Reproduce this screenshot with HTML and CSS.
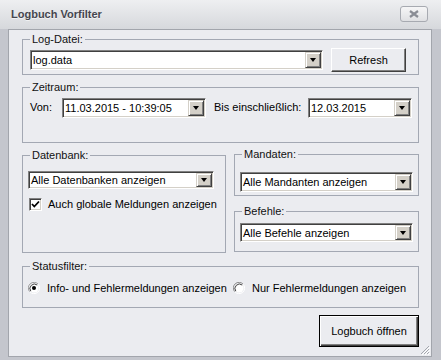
FILE: index.html
```html
<!DOCTYPE html>
<html lang="de">
<head>
<meta charset="utf-8">
<title>Logbuch Vorfilter</title>
<link rel="stylesheet" href="styles.css">
</head>
<body>
<div class="window">
  <div class="titlebar">
    <span class="title">Logbuch Vorfilter</span>
    <span class="close">
      <svg width="12" height="8" viewBox="0 0 12 8"><path d="M2 1 L10 7 M10 1 L2 7" stroke="#8a8d95" stroke-width="2.2" fill="none"/></svg>
    </span>
  </div>
  <div class="client">
    <fieldset class="group g-log">
      <legend>Log-Datei:</legend>
      <div class="inner row-log">
        <div class="combo c-log"><span class="combo-text">log.data</span><span class="combo-arrow"><i></i></span></div>
        <button class="btn btn-refresh">Refresh</button>
      </div>
    </fieldset>

    <fieldset class="group g-time">
      <legend>Zeitraum:</legend>
      <div class="inner row-time">
        <span class="lbl lbl-von">Von:</span>
        <div class="combo c-von"><span class="combo-text">11.03.2015 - 10:39:05</span><span class="combo-arrow"><i></i></span></div>
        <span class="lbl lbl-bis">Bis einschließlich:</span>
        <div class="combo c-bis"><span class="combo-text">12.03.2015</span><span class="combo-arrow"><i></i></span></div>
      </div>
    </fieldset>

    <div class="row3">
      <fieldset class="group g-db">
        <legend>Datenbank:</legend>
        <div class="inner inner-db">
          <div class="combo c-db"><span class="combo-text">Alle Datenbanken anzeigen</span><span class="combo-arrow"><i></i></span></div>
          <label class="check-row">
            <span class="checkbox"><svg width="9" height="9" viewBox="0 0 9 9"><path d="M1 4 L3.3 6.5 L8 1.5" stroke="#000" stroke-width="1.8" fill="none"/></svg></span>
            <span>Auch globale Meldungen anzeigen</span>
          </label>
        </div>
      </fieldset>
      <div class="rightcol">
        <fieldset class="group g-mand">
          <legend>Mandaten:</legend>
          <div class="inner inner-mand">
            <div class="combo c-mand"><span class="combo-text">Alle Mandanten anzeigen</span><span class="combo-arrow"><i></i></span></div>
          </div>
        </fieldset>
        <fieldset class="group g-bef">
          <legend>Befehle:</legend>
          <div class="inner inner-bef">
            <div class="combo c-bef"><span class="combo-text">Alle Befehle anzeigen</span><span class="combo-arrow"><i></i></span></div>
          </div>
        </fieldset>
      </div>
    </div>

    <fieldset class="group g-status">
      <legend>Statusfilter:</legend>
      <div class="inner row-status">
        <label class="radio-opt opt1">
          <svg class="radio" width="12" height="12" viewBox="0 0 12 12">
            <path d="M10.2 2.2 A5.5 5.5 0 0 0 1.8 9.8" stroke="#9a9a9a" stroke-width="1" fill="none"/>
            <circle cx="6" cy="6" r="4.5" fill="#fff"/>
            <path d="M9.2 3 A4.5 4.5 0 0 0 2.8 9.2" stroke="#404040" stroke-width="1" fill="none"/>
            <path d="M1.8 9.8 A5.5 5.5 0 0 0 10.2 2.2" stroke="#fff" stroke-width="1" fill="none"/>
            <circle cx="6" cy="6" r="2" fill="#000"/>
          </svg>
          <span>Info- und Fehlermeldungen anzeigen</span>
        </label>
        <label class="radio-opt opt2">
          <svg class="radio" width="12" height="12" viewBox="0 0 12 12">
            <path d="M10.2 2.2 A5.5 5.5 0 0 0 1.8 9.8" stroke="#8a8a8a" stroke-width="1" fill="none"/>
            <circle cx="6" cy="6" r="4.5" fill="#fff"/>
            <path d="M9.2 3 A4.5 4.5 0 0 0 2.8 9.2" stroke="#404040" stroke-width="1" fill="none"/>
            <path d="M1.8 9.8 A5.5 5.5 0 0 0 10.2 2.2" stroke="#fff" stroke-width="1" fill="none"/>
          </svg>
          <span>Nur Fehlermeldungen anzeigen</span>
        </label>
      </div>
    </fieldset>

    <div class="actions">
      <button class="btn btn-open">Logbuch öffnen</button>
    </div>

    <svg class="grip" width="10" height="10" viewBox="0 0 10 10">
      <path d="M9 1 L1 9 M9 4 L4 9 M9 7 L7 9" stroke="#a4a7ae" stroke-width="1" fill="none"/>
      <path d="M10 2 L2 10 M10 5 L5 10 M10 8 L8 10" stroke="#fff" stroke-width="1" fill="none"/>
    </svg>
  </div>
</div>
</body>
</html>
```

FILE: styles.css
```css
* { box-sizing: border-box; }

html, body {
  margin: 0;
  padding: 0;
}

body {
  background: #c4c6cd;
  font-family: "Liberation Sans", Arial, sans-serif;
  font-size: 11px;
  color: #000;
}

.window {
  width: 441px;
  height: 360px;
  display: flex;
  flex-direction: column;
  background: #c4c6cd;
}

.titlebar {
  height: 29px;
  flex: none;
  display: flex;
  align-items: center;
  justify-content: space-between;
  padding: 0 13px 0 11px;
  background: linear-gradient(#eeeff1, #d6d8dc);
}

.title {
  font-weight: bold;
  font-size: 11px;
  color: #45464f;
  text-shadow: 0 1px 0 rgba(255,255,255,0.6);
  margin-top: -1px;
}

.close {
  width: 28px;
  height: 16px;
  border: 1px solid #a7aab1;
  border-radius: 3px;
  background: linear-gradient(#f6f6f7, #dfe0e3);
  display: flex;
  align-items: center;
  justify-content: center;
  margin-top: -1px;
}

.client {
  position: relative;
  height: 328px;
  margin: 0 9px 3px 8px;
  border: 1px solid #a2a5ac;
  background: #ebecf0;
  padding: 3px 12px 0 13px;
  display: flex;
  flex-direction: column;
}

.group {
  margin: 0;
  padding: 0;
  border: 1px solid #a3a8b3;
  min-width: 0;
}

.group legend {
  margin-left: 7px;
  padding: 0 2px;
  line-height: 13px;
  font-size: 11px;
  color: #111;
}

.inner {
  display: flex;
}

/* Log-Datei */
.g-log { height: 42px; }
.row-log {
  padding: 2px 0 0 7px;
  align-items: center;
  height: 26px;
}
.c-log { width: 293px; height: 20px; }

/* Zeitraum */
.g-time { height: 62px; margin-top: 6px; }
.row-time {
  padding: 4px 0 0 7px;
  align-items: flex-start;
}
.lbl { line-height: 13px; margin-top: 3px; white-space: nowrap; }
.lbl-von { width: 32px; }
.lbl-bis { width: 94px; margin-left: 8px; }
.c-von { width: 144px; height: 20px; }
.c-bis { width: 104px; height: 20px; }

/* Row 3 */
.row3 {
  display: flex;
  gap: 8px;
  margin-top: 5px;
  height: 105px;
  flex: none;
}
.g-db { width: 204px; height: 104px; margin-top: 1px; }
.inner-db {
  flex-direction: column;
  padding: 9px 0 0 5px;
}
.c-db { width: 186px; height: 18px; }

.check-row {
  display: flex;
  align-items: center;
  margin-top: 9px;
  margin-left: 1px;
  line-height: 13px;
}
.checkbox {
  width: 13px;
  height: 13px;
  background: #fff;
  border: 1px solid;
  border-color: #808080 #fff #fff #808080;
  box-shadow: inset 1px 1px 0 #404040, inset -1px -1px 0 #d4d0c8;
  display: flex;
  align-items: center;
  justify-content: center;
  margin-right: 6px;
}

.rightcol {
  width: 185px;
  display: flex;
  flex-direction: column;
  gap: 9px;
}
.g-mand { height: 48px; }
.inner-mand { padding: 11px 0 0 5px; }
.c-mand { width: 173px; height: 20px; }
.g-bef { height: 47px; }
.inner-bef { padding: 5px 0 0 5px; }
.c-bef { width: 173px; height: 19px; }

/* Statusfilter */
.g-status { height: 48px; margin-top: 7px; }
.row-status {
  padding: 8px 0 0 5px;
  align-items: center;
}
.radio-opt {
  display: flex;
  align-items: center;
  height: 14px;
  white-space: nowrap;
}
.radio { margin-right: 7px; flex: none; }
.opt1 { width: 205px; }

/* Combo boxes */
.combo {
  display: flex;
  align-items: stretch;
  background: #fff;
  border: 1px solid;
  border-color: #808080 #fff #fff #808080;
  box-shadow: inset 1px 1px 0 #404040, inset -1px -1px 0 #d4d0c8;
  padding: 1px;
}
.combo-text {
  flex: 1;
  display: flex;
  align-items: center;
  padding-left: 1px;
  font-size: 11px;
  white-space: nowrap;
  overflow: hidden;
}
.combo-arrow {
  width: 16px;
  flex: none;
  background: #d4d0c8;
  border: 1px solid;
  border-color: #d4d0c8 #404040 #404040 #d4d0c8;
  box-shadow: inset 1px 1px 0 #fff, inset -1px -1px 0 #808080;
  display: flex;
  align-items: center;
  justify-content: center;
}
.combo-arrow i {
  width: 0;
  height: 0;
  border-left: 3.5px solid transparent;
  border-right: 3.5px solid transparent;
  border-top: 4px solid #000;
}

/* Buttons */
.btn {
  font-family: "Liberation Sans", Arial, sans-serif;
  font-size: 11px;
  color: #000;
  background: #ebecf0;
  border: 1px solid;
  border-color: #fff #404040 #404040 #fff;
  box-shadow: inset -1px -1px 0 #808080;
  padding: 0;
  margin: 0;
}
.btn-refresh {
  width: 75px;
  height: 24px;
  margin-left: 8px;
}

.actions {
  display: flex;
  justify-content: flex-end;
  margin-top: 7px;
}
.btn-open {
  width: 100px;
  height: 32px;
  border: 1px solid #000;
  box-shadow: inset 1px 1px 0 #fff, inset -1px -1px 0 #404040, inset -2px -2px 0 #808080;
}

.grip {
  position: absolute;
  right: 1px;
  bottom: 1px;
}
```
